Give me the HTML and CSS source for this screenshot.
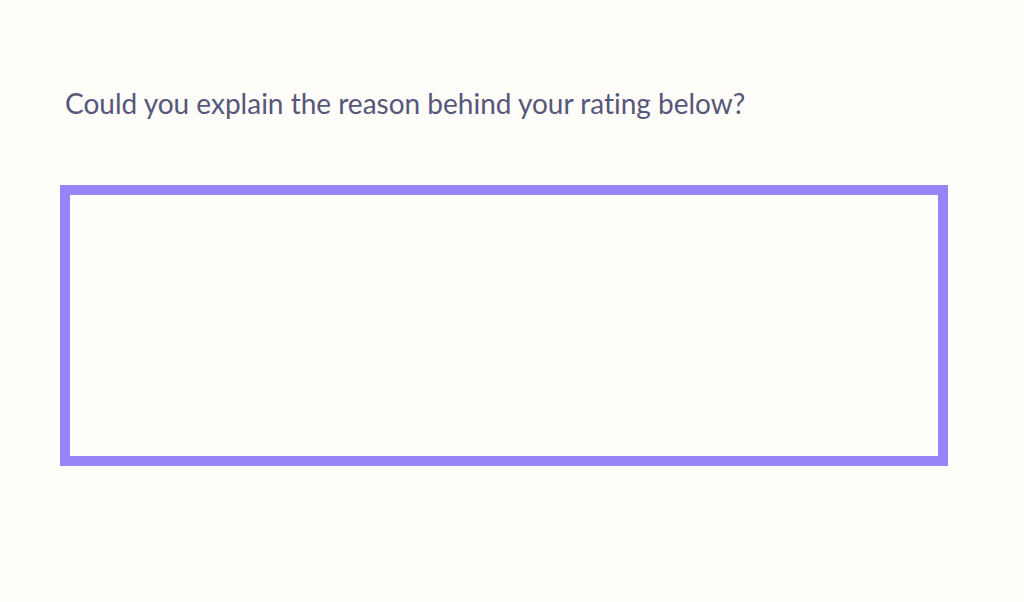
FILE: index.html
```html
<!DOCTYPE html>
<html lang="en">
<head>
    <meta charset="UTF-8">
    <meta name="viewport" content="width=device-width, initial-scale=1.0">
    <title>Feedback</title>
    <link rel="stylesheet" href="styles.css">
</head>
<body>
    <div class="question">
        <label class="question-label" for="reason">Could you explain the reason behind your rating below?</label>
        <textarea id="reason" class="answer-field"></textarea>
    </div>
</body>
</html>
```

FILE: styles.css
```css
* {
    margin: 0;
    padding: 0;
    box-sizing: border-box;
}

body {
    font-family: 'Lato', 'Open Sans', sans-serif;
    background: #fefdf9;
    min-height: 100vh;
}

.question {
    display: flex;
    flex-direction: column;
    padding: 83px 0 0 60px;
}

.question-label {
    font-size: 28px;
    line-height: 40px;
    color: #56577a;
    padding-left: 5px;
    margin-bottom: 62px;
    font-variant-ligatures: none;
}

.answer-field {
    width: 888px;
    height: 281px;
    border: 10px solid #9585f8;
    background: #fefdf9;
    resize: none;
    outline: none;
    font-family: inherit;
    font-size: 20px;
}
```
